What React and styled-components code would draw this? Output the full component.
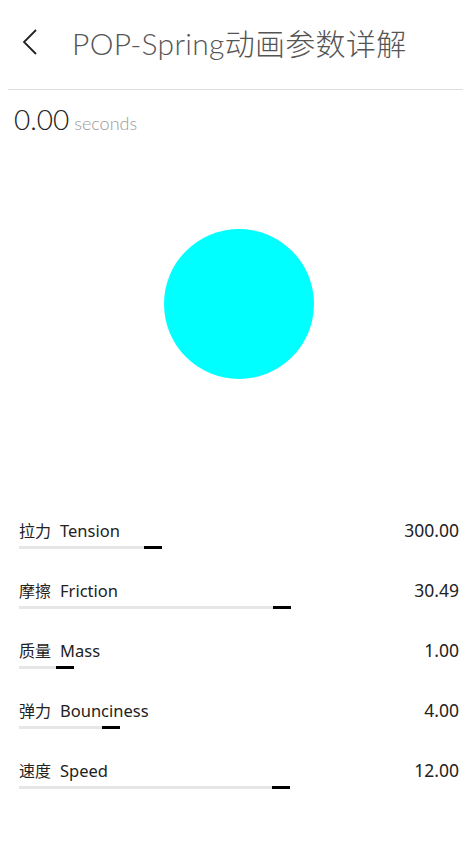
import styled, { createGlobalStyle } from 'styled-components'

const GlobalStyle = createGlobalStyle`
  html, body {
    margin: 0;
    padding: 0;
    background: #fff;
  }
  body {
    font-family: Lato, "Noto Sans CJK SC", sans-serif;
  }
`

const params = [
  { cn: '拉力', en: 'Tension', value: '300.00', width: 143 },
  { cn: '摩擦', en: 'Friction', value: '30.49', width: 272 },
  { cn: '质量', en: 'Mass', value: '1.00', width: 55 },
  { cn: '弹力', en: 'Bounciness', value: '4.00', width: 101 },
  { cn: '速度', en: 'Speed', value: '12.00', width: 271 }
]

export default function App() {
  return (
    <Page>
      <GlobalStyle />
      <Header>
        <BackButton>
          <svg width="16" height="28" viewBox="0 0 16 28">
            <path d="M14 2 L2 14 L14 26" fill="none" stroke="#222" strokeWidth="1.8" />
          </svg>
        </BackButton>
        <Title>POP-Spring动画参数详解</Title>
      </Header>
      <TimeRow>
        <Time>0.00</Time>
        <Unit>seconds</Unit>
      </TimeRow>
      <Stage>
        <Ball />
      </Stage>
      <Controls>
        {params.map(p => (
          <Param key={p.en}>
            <ParamHead>
              <Label>
                <Cn>{p.cn}</Cn>
                <En>{p.en}</En>
              </Label>
              <Value>{p.value}</Value>
            </ParamHead>
            <Track style={{ width: p.width }}>
              <Thumb />
            </Track>
          </Param>
        ))}
      </Controls>
    </Page>
  )
}

const Page = styled.div`
  width: 471px;
  height: 843px;
  overflow: hidden;
  color: #222;
`

const Header = styled.div`
  display: flex;
  align-items: center;
  height: 89px;
  margin: 0 8px;
  border-bottom: 1px solid #dcdcdc;
`

const BackButton = styled.div`
  display: flex;
  align-items: center;
  margin: 0 0 6px 14px;
  width: 50px;
`

const Title = styled.h1`
  margin: 0 0 6px 0;
  font-size: 30px;
  font-weight: 300;
  color: #555;
  letter-spacing: 0.3px;
`

const TimeRow = styled.div`
  display: flex;
  align-items: baseline;
  padding: 12px 0 0 14px;
`

const Time = styled.span`
  font-size: 28px;
  font-weight: 300;
  color: #222;
`

const Unit = styled.span`
  margin-left: 5px;
  font-size: 18px;
  font-weight: 300;
  color: #999;
`

const Stage = styled.div`
  display: flex;
  justify-content: center;
  padding: 93px 0 139px;
`

const Ball = styled.div`
  width: 150px;
  height: 150px;
  margin-right: -7px;
  border-radius: 50%;
  background: #00ffff;
`

const Controls = styled.div`
  display: flex;
  flex-direction: column;
  padding: 0 12px 0 19px;
`

const Param = styled.div`
  display: flex;
  flex-direction: column;
  height: 60px;
`

const ParamHead = styled.div`
  display: flex;
  justify-content: space-between;
  align-items: baseline;
  font-family: "Noto Sans", "Noto Sans CJK SC", sans-serif;
  color: #222;
`

const Label = styled.div`
  display: flex;
  align-items: baseline;
`

const Cn = styled.span`
  font-size: 16px;
`

const En = styled.span`
  margin-left: 9px;
  font-size: 16.5px;
`

const Value = styled.div`
  font-size: 17.5px;
`

const Track = styled.div`
  position: relative;
  height: 3px;
  margin-top: 4px;
  background: #e6e6e6;
`

const Thumb = styled.div`
  position: absolute;
  right: 0;
  top: 0;
  width: 18px;
  height: 3px;
  background: #000;
`
